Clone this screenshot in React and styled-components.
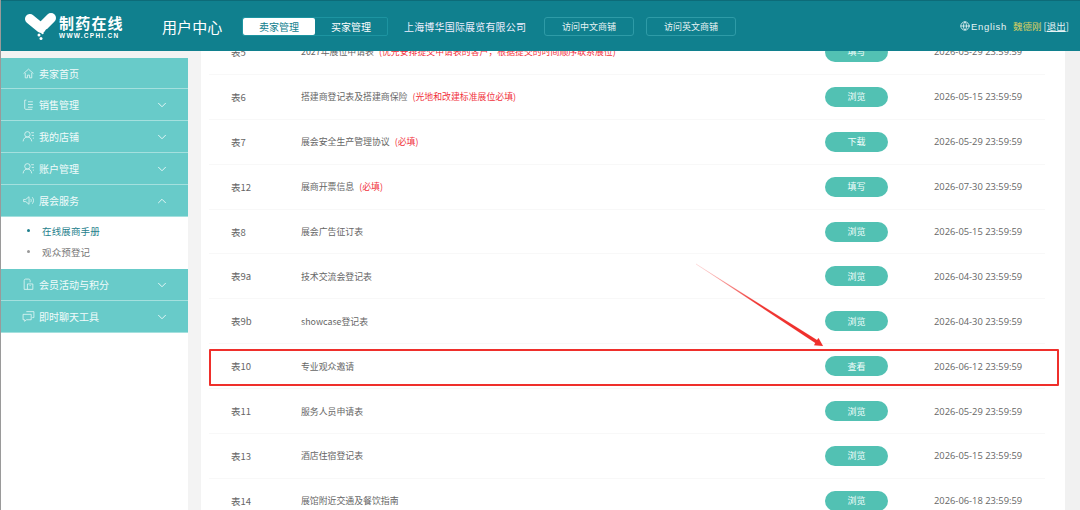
import React from "react";
import styled, { createGlobalStyle } from "styled-components";
import { ChevronDown, ChevronUp, Globe } from "lucide-react";

const Global = createGlobalStyle`
  html, body { margin: 0; padding: 0; height: 510px; overflow: hidden; background: #f3f3f3; }
  body { font-family: "Liberation Sans", "Noto Sans CJK SC", sans-serif; }
  * { box-sizing: border-box; }
`;
const cjk = `"Noto Sans CJK SC", "Noto Sans", sans-serif`;

const Page = styled.div`
  position: relative; width: 1080px; height: 510px; overflow: hidden; background: #f3f3f3;
  border-left: 1px solid #9a9a9a;
`;
const Header = styled.header`
  position: relative; z-index: 2; height: 51px; background: #10808e; border-top: 1px solid #0d6b78;
  display: flex; align-items: center; padding: 0 0 0 23px; color: #fff; font-family: ${cjk};
`;
const Logo = styled.div`display: flex; align-items: center; gap: 2px; width: 138px; height: 36px;`;
const LogoText = styled.div`display: flex; flex-direction: column; line-height: 1; margin-top: 2px;`;
const LogoCn = styled.span`font-size: 15px; font-weight: 700; letter-spacing: 1.2px; line-height: 17px;`;
const LogoEn = styled.span`font-family: "Liberation Sans", sans-serif; font-size: 6.5px; font-weight: 700; letter-spacing: 1.25px; line-height: 9px;`;
const Title = styled.div`font-size: 15px; width: 80px; margin-top: 1px; letter-spacing: .1px;`;
const TabGroup = styled.div`
  display: flex; width: 146px; height: 19px; border: 1px solid #1d94a1; border-radius: 2px; font-size: 10px;
`;
const Tab = styled.div`
  width: 73px; display: flex; align-items: center; justify-content: center; border-radius: 2px;
  background: ${p => p.$on ? "#fff" : "transparent"}; color: ${p => p.$on ? "#10808e" : "#fff"};
`;
const Company = styled.div`font-size: 10px; letter-spacing: .18px; margin-left: 16px; width: 140px; white-space: nowrap; color: #eef;`;
const Visit = styled.div`
  width: 90px; height: 19px; margin-right: 12px; border: 1px solid #2e9ba7; border-radius: 3px;
  font-size: 9px; display: flex; align-items: center; justify-content: center; color: #e6f3f4;
`;
const UserBox = styled.div`
  margin-left: auto; display: flex; align-items: center; font-size: 9.5px; padding-right: 11px; white-space: nowrap; color: #e6f3f4;
`;
const Lang = styled.span`display: flex; align-items: center; gap: 1px; font-family: "Liberation Sans", sans-serif; letter-spacing: .7px; margin-right: 6px; font-size: 9.5px;`;
const Name = styled.span`color: #d7cf62; margin-right: 2px;`;
const Quit = styled.span`text-decoration: underline;`;

const Body = styled.div`display: flex; height: 459px; padding: 7px 15px 0 0;`;
const Side = styled.nav`width: 187px; flex: none; display: flex; flex-direction: column; font-family: ${cjk};`;
const MenuItem = styled.div`
  height: 32px; flex: none; background: #68cbc9; border-bottom: 1px solid #a4e0de; color: #f2fbfb;
  display: flex; align-items: center; padding: 0 19px 0 21px; font-size: 10px;
  &:first-child { height: 31px; }
  & > span { margin-left: 4px; flex: 1; }
`;
const SubList = styled.div`background: #fff; height: 52px; padding-top: 3px; flex: none;`;
const SubItem = styled.div`
  height: 21px; display: flex; align-items: center; font-size: 9.5px; padding-left: 26px; gap: 12px; letter-spacing: .15px;
  color: ${p => p.$on ? "#1f7f8d" : "#777"};
  &::before { content: ""; width: 3px; height: 3px; border-radius: 50%; background: ${p => p.$on ? "#1f7f8d" : "#999"}; }
`;
const SideFill = styled.div`flex: 1; background: #fff;`;
const Main = styled.main`
  margin-left: 13px; flex: 1; background: #fff; height: 510px; margin-top: -58px; padding-top: 30px; overflow: hidden;
  font-family: ${cjk};
`;
const Row = styled.div`
  height: 44.9px; margin: 0 20px 0 8px; display: flex; align-items: center; color: #666; font-size: 8.9px;
  border-bottom: 1px solid #f8f8f8;
`;
const No = styled.div`width: 92px; padding-left: 22px; flex: none; font-size: 9.5px;`;
const Title2 = styled.div`flex: 1; white-space: nowrap;`;
const Red = styled.span`color: #f1313c; margin-left: 5px;`;
const Btn = styled.div`
  width: 63px; height: 20px; border-radius: 10px; background: #52c1b3; color: #f4fffd; flex: none;
  display: flex; align-items: center; justify-content: center; font-size: 9px; margin-right: 46px;
`;
const Time = styled.div`width: 88px; flex: none; font-size: 9.35px; color: #666; font-family: "Open Sans", sans-serif; margin-right: 23px; white-space: nowrap;`;
const Scrollbar = styled.div`
  position: absolute; right: 0; top: 51px; width: 15px; height: 459px; background: #f1f1f1;
`;
const Highlight = styled.div`
  position: absolute; left: 208px; top: 349px; width: 850px; height: 37px; border: 2px solid #ef2f2b; border-radius: 1px;
`;
const ArrowSvg = styled.svg`position: absolute; left: 690px; top: 258px; width: 140px; height: 96px;`;

const icon = { width: 13, height: 13, viewBox: "0 0 24 24", fill: "none", stroke: "#e4f6f5", strokeWidth: 1.5 };
const Home = () => <svg {...icon}><path d="M3 12 12 4l9 8M6 11v9h4v-5h4v5h4v-9" /></svg>;
const ListI = () => <svg {...icon}><path d="M5 4v15c0 1 1 2 2 2h12M5 4h3M11 7h9M11 12h9M11 17h9" /></svg>;
const Person = () => <svg {...icon}><circle cx="10" cy="8" r="5" /><path d="M2 21c1-6 4-8 8-8s7 2 8 8M17 5h5M18 10h4M20 15h2" /></svg>;
const Horn = () => <svg {...icon}><path d="M3 10v4h4l6 5V5l-6 5H3ZM16 9c1.5 2 1.5 4 0 6M19 6c3 4 3 8 0 12" /></svg>;
const Bag = () => <svg {...icon}><path d="M4 21V5c0-2 1-3 3-3h5c2 0 3 1 3 3v3M4 21h16V11H10v10M14 14h2" /></svg>;
const Chat = () => <svg {...icon}><path d="M8 3h14v11h-3M2 8h15v10H8l-3 3v-3H2Z" /></svg>;

const Item = ({ I, children, open, plain }) => (
  <MenuItem>
    <I />
    <span>{children}</span>
    {plain ? null : open ? <ChevronUp size={14} strokeWidth={1.5} /> : <ChevronDown size={14} strokeWidth={1.5} />}
  </MenuItem>
);

const rows = [
  ["表5", "2027年展位申请表", "(优先安排提交申请表的客户，根据提交的时间顺序联系展位)", "填写", "2026-05-29 23:59:59"],
  ["表6", "搭建商登记表及搭建商保险", "(光地和改建标准展位必填)", "浏览", "2026-05-15 23:59:59"],
  ["表7", "展会安全生产管理协议", "(必填)", "下载", "2026-05-29 23:59:59"],
  ["表12", "展商开票信息", "(必填)", "填写", "2026-07-30 23:59:59"],
  ["表8", "展会广告征订表", "", "浏览", "2026-05-15 23:59:59"],
  ["表9a", "技术交流会登记表", "", "浏览", "2026-04-30 23:59:59"],
  ["表9b", "showcase登记表", "", "浏览", "2026-04-30 23:59:59"],
  ["表10", "专业观众邀请", "", "查看", "2026-06-12 23:59:59"],
  ["表11", "服务人员申请表", "", "浏览", "2026-05-29 23:59:59"],
  ["表13", "酒店住宿登记表", "", "浏览", "2026-05-15 23:59:59"],
  ["表14", "展馆附近交通及餐饮指南", "", "浏览", "2026-06-18 23:59:59"],
];

export default function App() {
  return (
    <Page>
      <Global />
      <Header>
        <Logo>
          <svg width="33" height="30" viewBox="0 0 33 30">
            <path d="M6 8 17 17" stroke="#fff" strokeWidth="10" strokeLinecap="round" />
            <path d="M27 7 20 14" stroke="#fff" strokeWidth="10" strokeLinecap="round" />
            <circle cx="15" cy="24" r="1.5" fill="#fff" /><circle cx="18.5" cy="22" r="1.2" fill="#fff" /><circle cx="17" cy="27.5" r="1.5" fill="#fff" />
          </svg>
          <LogoText><LogoCn>制药在线</LogoCn><LogoEn>WWW.CPHI.CN</LogoEn></LogoText>
        </Logo>
        <Title>用户中心</Title>
        <TabGroup><Tab $on>卖家管理</Tab><Tab>买家管理</Tab></TabGroup>
        <Company>上海博华国际展览有限公司</Company>
        <Visit>访问中文商铺</Visit>
        <Visit>访问英文商铺</Visit>
        <UserBox>
          <Lang><Globe size={10} />English</Lang>
          <Name>魏德刚</Name>
          <span>[<Quit>退出</Quit>]</span>
        </UserBox>
      </Header>
      <Body>
        <Side>
          <Item I={Home} plain>卖家首页</Item>
          <Item I={ListI}>销售管理</Item>
          <Item I={Person}>我的店铺</Item>
          <Item I={Person}>账户管理</Item>
          <Item I={Horn} open>展会服务</Item>
          <SubList>
            <SubItem $on>在线展商手册</SubItem>
            <SubItem>观众预登记</SubItem>
          </SubList>
          <Item I={Bag}>会员活动与积分</Item>
          <Item I={Chat}>即时聊天工具</Item>
          <SideFill />
        </Side>
        <Main>
          {rows.map(r => (
            <Row key={r[0]}>
              <No>{r[0]}</No>
              <Title2>{r[1]}{r[2] && <Red>{r[2]}</Red>}</Title2>
              <Btn>{r[3]}</Btn>
              <Time>{r[4]}</Time>
            </Row>
          ))}
        </Main>
      </Body>
      <Scrollbar />
      <Highlight />
      <ArrowSvg viewBox="0 0 140 96">
        <defs>
          <linearGradient id="ar" x1="0" y1="0" x2="1" y2="0.65">
            <stop offset="0" stopColor="#ef2f2b" stopOpacity=".12" />
            <stop offset=".55" stopColor="#ef2f2b" stopOpacity=".95" />
            <stop offset="1" stopColor="#ef2f2b" />
          </linearGradient>
        </defs>
        <path d="M5 6 126 82l1.5-2 4.5 8-9-.7 1.3-2.3Z" fill="url(#ar)" stroke="#ef2f2b" strokeOpacity=".3" strokeWidth=".3" />
      </ArrowSvg>
    </Page>
  );
}
